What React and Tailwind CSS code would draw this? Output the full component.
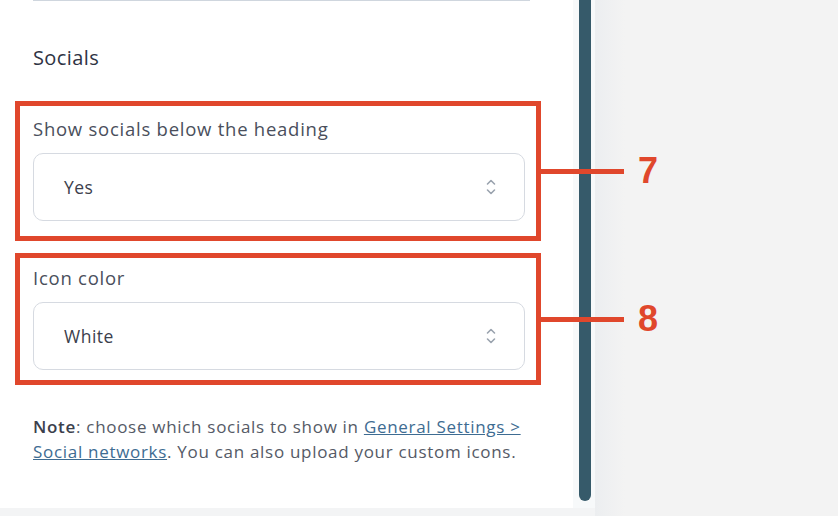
import React from 'react'

const Chevrons = () => (
  <svg width="12" height="20" viewBox="0 0 12 20" fill="none" stroke="#9aa3ae" strokeWidth="1.6" strokeLinecap="round" strokeLinejoin="round">
    <path d="M2.5 7l3.5-3.5L9.5 7" />
    <path d="M2.5 13l3.5 3.5L9.5 13" />
  </svg>
)

const SelectField = ({ value }) => (
  <div className="h-[68px] w-[492px] rounded-[10px] border border-[#d6dae1] bg-white flex items-center justify-between pl-[30px] pr-[27px]">
    <span className="text-[17.5px] tracking-[0.5px] text-[#3b404c]">{value}</span>
    <Chevrons />
  </div>
)

const Callout = ({ number, children, className }) => (
  <div className={`relative border-[5px] border-[#e0472c] ${className}`}>
    {children}
    <div className="absolute left-full top-1/2 -translate-y-1/2 flex items-center z-10">
      <div className="w-[88px] h-[5px] bg-[#e0472c]" />
      <span className="ml-[14px] text-[36px] font-bold text-[#e0472c] leading-none" style={{ fontFamily: '"Liberation Sans", Arial, sans-serif' }}>
        {number}
      </span>
    </div>
  </div>
)

export default function App() {
  return (
    <div className="flex h-[516px] w-full bg-[#f3f4f5]" style={{ fontFamily: '"Open Sans", Lato, sans-serif' }}>
      <div className="flex flex-col w-[595px]">
        <div className="flex h-[508px]">
          <div className="w-[573px] bg-white relative z-10">
            <div className="ml-[33px] w-[497px] h-px bg-[#cfd6de]" />
            <h2 className="ml-[33px] mt-[44px] text-[20px] font-medium tracking-[0.4px] text-[#2e3343] leading-[26px]">Socials</h2>

            <Callout number="7" className="ml-[15px] mt-[30px] w-[526px] h-[140px] pt-[11px] pl-[13px]">
              <div className="text-[18.5px] tracking-[0.75px] text-[#4a4f5c] leading-[24px]">Show socials below the heading</div>
              <div className="mt-[12px]">
                <SelectField value="Yes" />
              </div>
            </Callout>

            <Callout number="8" className="ml-[15px] mt-[12px] w-[526px] h-[132px] pt-[8px] pl-[13px]">
              <div className="text-[18.5px] tracking-[0.75px] text-[#4a4f5c] leading-[24px]">Icon color</div>
              <div className="mt-[12px]">
                <SelectField value="White" />
              </div>
            </Callout>

            <p className="ml-[33px] mt-[29px] w-[500px] text-[17px] tracking-[0.7px] leading-[25px] text-[#555a66]">
              <span className="font-semibold text-[#3b404c]">Note</span>: choose which socials to show in{' '}
              <a href="#" className="text-[#3e6c92] underline">General Settings &gt; Social networks</a>. You can also upload your custom icons.
            </p>
          </div>
          <div className="w-[22px] bg-[#f7f9fa] pl-[6px]">
            <div className="w-[12px] h-[501px] bg-[#365a6a] rounded-b-[6px]" />
          </div>
        </div>
        <div className="flex-1 bg-[#f3f4f5]" />
      </div>
      <div className="flex-1 bg-[linear-gradient(to_right,#eceef0,#f3f3f3_30px)]" />
    </div>
  )
}
